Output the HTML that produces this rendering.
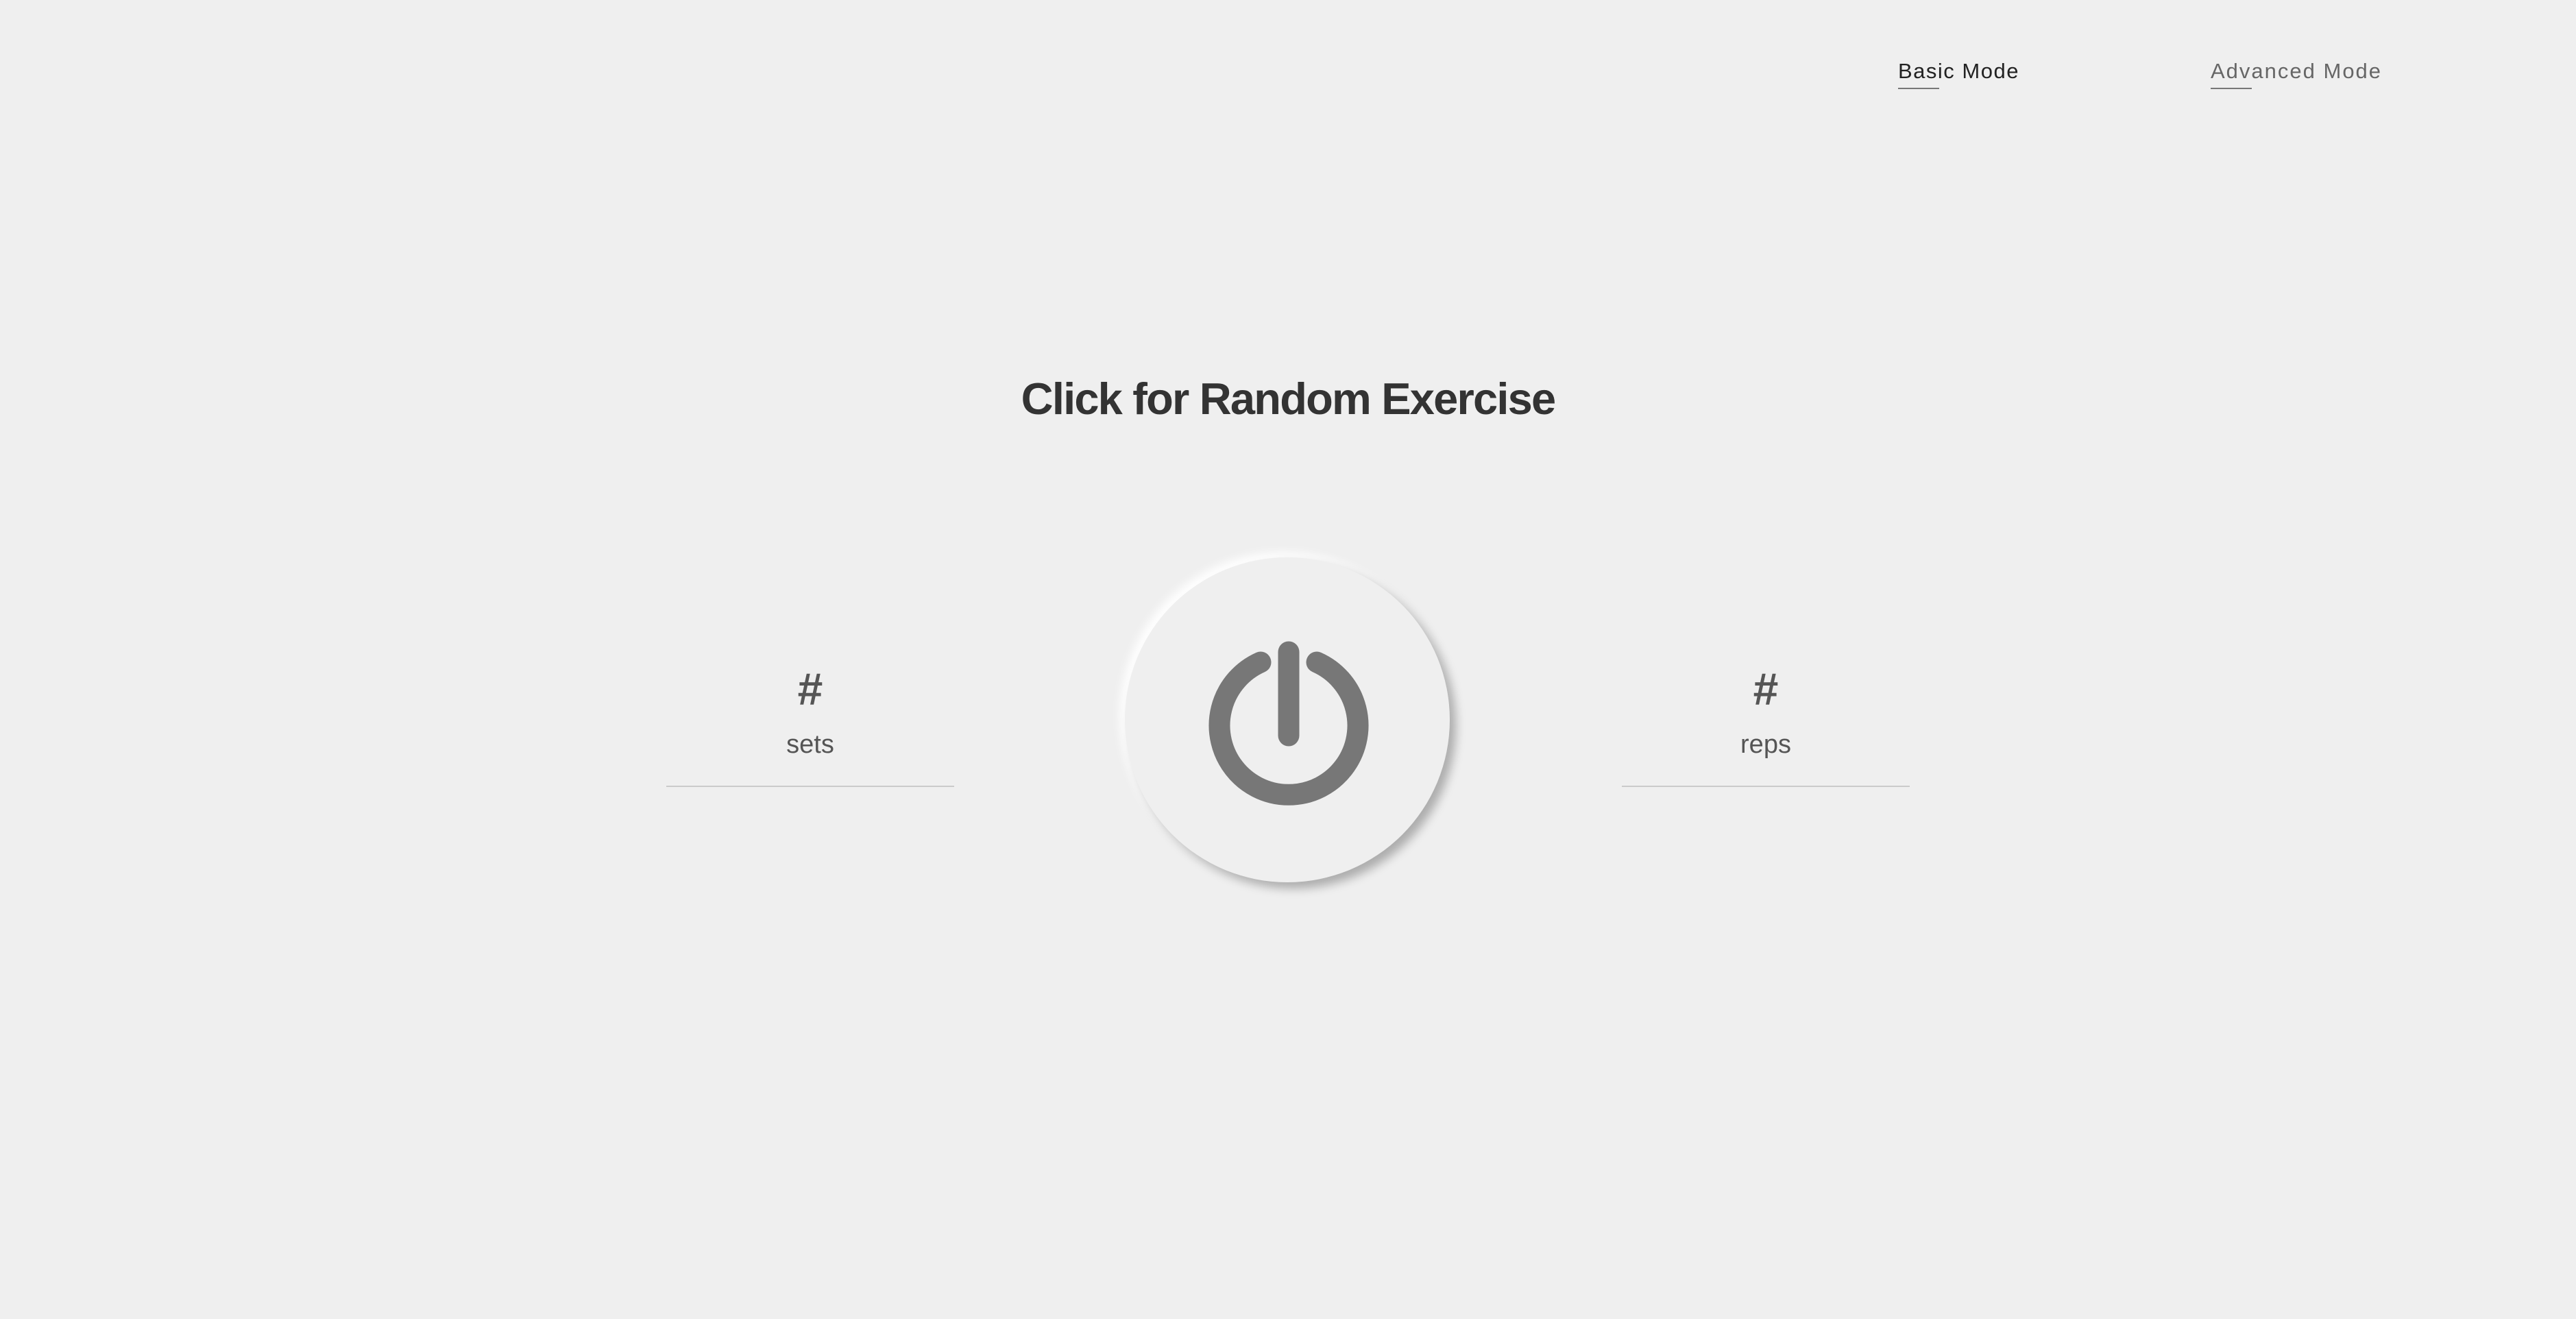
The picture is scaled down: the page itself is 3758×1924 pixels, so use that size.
<!DOCTYPE html>
<html><head><meta charset="utf-8"><style>
html,body{margin:0;padding:0;}
body{width:3758px;height:1924px;background:#efefef;position:relative;overflow:hidden;font-family:"Liberation Sans",sans-serif;}
.nav{position:absolute;top:84px;font-size:31px;line-height:40px;white-space:nowrap;}
.nav .u{position:absolute;left:0;top:44px;width:60px;height:2px;background:#777;}
.title{position:absolute;left:0;width:3758px;top:546px;text-align:center;font-size:65px;font-weight:bold;color:#333;letter-spacing:-1.8px;line-height:72px;}
.circle{position:absolute;left:1641px;top:813px;width:474px;height:474px;border-radius:50%;background:#efefef;box-shadow:9px 9px 14px rgba(0,0,0,.28),-7px -7px 14px #ffffff;}
.stat{position:absolute;width:420px;text-align:center;color:#555;}
.stat .h{position:absolute;left:0;width:420px;top:0;font-size:66px;line-height:70px;font-weight:bold;}
.stat .l{position:absolute;left:0;width:420px;top:94px;font-size:38px;line-height:44px;}
.stat .line{position:absolute;left:0;top:176px;width:420px;height:2px;background:#cacaca;}
</style></head><body>
<div class="nav" style="left:2769px;color:#222;letter-spacing:1.5px;">Basic Mode<div class="u"></div></div>
<div class="nav" style="left:3225px;color:#666;letter-spacing:2px;">Advanced Mode<div class="u"></div></div>
<div class="title">Click for Random Exercise</div>
<div class="circle"></div>
<svg style="position:absolute;left:0;top:0" width="3758" height="1924">
<path d="M1839 966 A101 101 0 1 0 1921 966" fill="none" stroke="#777" stroke-width="31" stroke-linecap="round"/>
<line x1="1880" y1="951" x2="1880" y2="1073" stroke="#777" stroke-width="31" stroke-linecap="round"/>
</svg>
<div class="stat" style="left:972px;top:970px;"><div class="h">#</div><div class="l">sets</div><div class="line"></div></div>
<div class="stat" style="left:2366px;top:970px;"><div class="h">#</div><div class="l">reps</div><div class="line"></div></div>
</body></html>
